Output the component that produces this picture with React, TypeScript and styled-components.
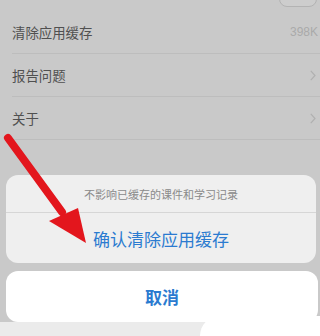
import React from "react";
import styled, { createGlobalStyle } from "styled-components";

const Global = createGlobalStyle`
  html, body { margin: 0; padding: 0; }
  body { font-family: "Noto Sans CJK SC", "Noto Sans", sans-serif; background: #c9c9c9; }
`;

const Page = styled.div`
  position: relative;
  width: 320px;
  height: 336px;
  overflow: hidden;
  background: #c9c9c9;
  display: flex;
  flex-direction: column;
`;

const TopStrip = styled.div`
  height: 11px;
  display: flex;
  justify-content: flex-end;
  padding-right: 3px;
`;

const SwitchStub = styled.div`
  width: 36px;
  height: 16px;
  margin-top: -11px;
  border-radius: 8px;
  border: 1px solid #b3b3b3;
  background: #cdcdcd;
`;

const List = styled.div`
  padding-left: 12px;
  display: flex;
  flex-direction: column;
`;

const Row = styled.div`
  height: 42px;
  display: flex;
  align-items: center;
  justify-content: space-between;
  padding-right: 4px;
  border-bottom: 1px solid #bdbdbd;
`;

const Label = styled.span`
  font-size: 13.4px;
  color: #505050;
`;

const Value = styled.span`
  font-family: "Liberation Sans", sans-serif;
  font-size: 12px;
  color: #aaaaaa;
  margin-right: -2px;
`;

const Chevron = styled.svg`
  width: 6px;
  height: 11px;
`;

const Spacer = styled.div`
  flex: 1;
`;

const Sheet = styled.div`
  margin: 0 4px 0 6px;
  background: #efefef;
  border-radius: 12px;
  display: flex;
  flex-direction: column;
`;

const SheetTitle = styled.div`
  height: 37px;
  display: flex;
  align-items: center;
  justify-content: center;
  font-size: 11px;
  color: #8a8a8a;
  border-bottom: 1px solid #d6d6d6;
`;

const SheetAction = styled.div<{ $bold?: boolean }>`
  height: 50px;
  display: flex;
  align-items: center;
  justify-content: center;
  font-size: 17px;
  color: #2b7bd0;
  font-weight: ${(p) => (p.$bold ? 700 : 400)};
`;

const CancelCard = styled.div`
  margin: 8px 2px 0 6px;
  background: #ffffff;
  border-radius: 12px;
  height: 51px;
  display: flex;
  align-items: center;
  justify-content: center;
  font-size: 17px;
  font-weight: 700;
  color: #2b7bd0;
`;

const BottomBand = styled.div`
  height: 14px;
  background: #ebebeb;
  position: relative;
`;

const Blob = styled.div`
  position: absolute;
  left: 200px;
  top: -6px;
  width: 140px;
  height: 30px;
  border-radius: 20px 0 0 0;
  background: #ffffff;
`;

const ArrowOverlay = styled.svg`
  position: absolute;
  left: 0;
  top: 0;
  width: 320px;
  height: 336px;
  pointer-events: none;
`;

const ChevronIcon = () => (
  <Chevron viewBox="0 0 6 11">
    <path d="M0.8 0.8 L5 5.5 L0.8 10.2" fill="none" stroke="#b0b0b0" strokeWidth="1.2" />
  </Chevron>
);

export default function App() {
  return (
    <>
      <Global />
      <Page>
        <TopStrip>
          <SwitchStub />
        </TopStrip>
        <List>
          <Row>
            <Label>清除应用缓存</Label>
            <Value>398K</Value>
          </Row>
          <Row>
            <Label>报告问题</Label>
            <ChevronIcon />
          </Row>
          <Row>
            <Label>关于</Label>
            <ChevronIcon />
          </Row>
        </List>
        <Spacer />
        <Sheet>
          <SheetTitle>不影响已缓存的课件和学习记录</SheetTitle>
          <SheetAction>确认清除应用缓存</SheetAction>
        </Sheet>
        <CancelCard>取消</CancelCard>
        <BottomBand>
          <Blob />
        </BottomBand>
        <ArrowOverlay viewBox="0 0 320 336">
          <line x1="8" y1="138" x2="62" y2="212" stroke="#e3161d" strokeWidth="8" strokeLinecap="round" />
          <polygon points="86,243 49,221 78,208" fill="#e3161d" />
        </ArrowOverlay>
      </Page>
    </>
  );
}
